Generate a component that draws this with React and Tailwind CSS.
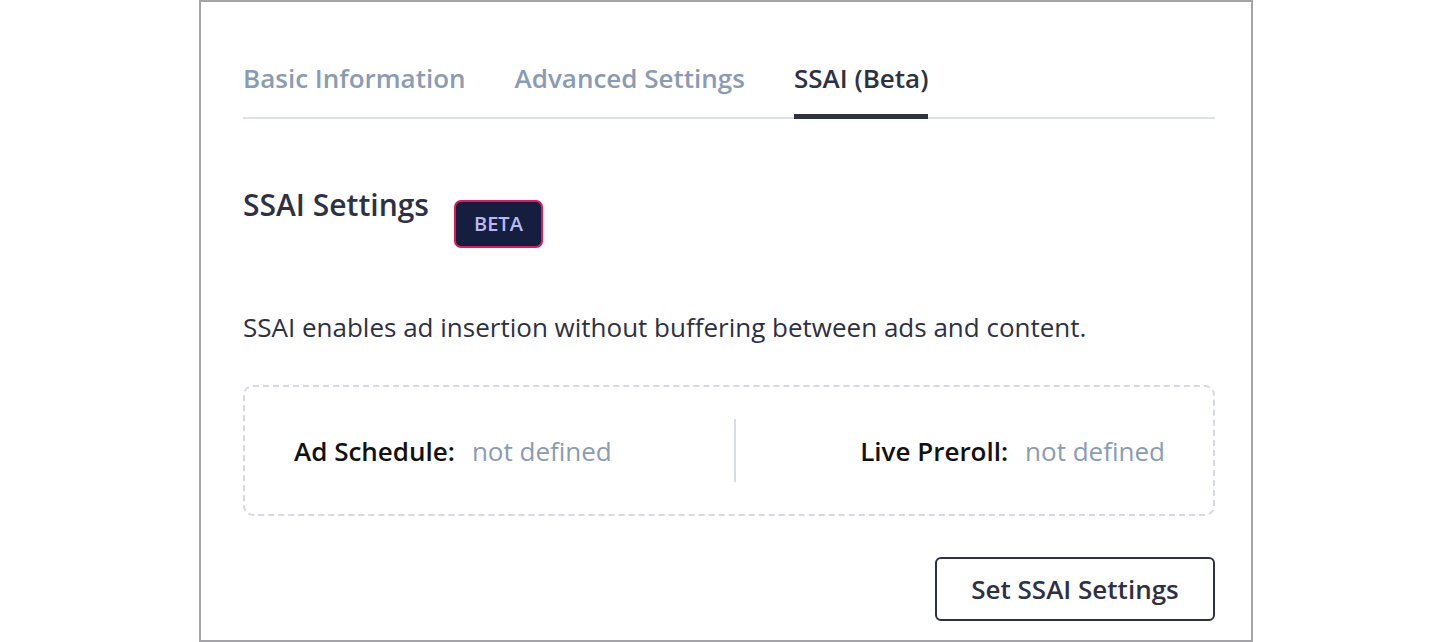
import React, { useState } from "react";

const tabs = ["Basic Information", "Advanced Settings", "SSAI (Beta)"];

function Field({ label, value }) {
  return (
    <div className="flex items-center gap-[17px] text-[26px] leading-[30px]">
      <span className="font-semibold text-[#111111]">{label}</span>
      <span className="text-[#8a9bb6]">{value}</span>
    </div>
  );
}

export default function App() {
  const [active, setActive] = useState(2);

  return (
    <div
      className="flex justify-center bg-white h-[642px] overflow-hidden"
      style={{ fontFamily: '"Open Sans", "Noto Sans", sans-serif' }}
    >
      <div className="ml-[6px] w-[1054px] h-[642px] border-2 border-[#a4a4a8] bg-white pl-[42px] pr-[36px] flex flex-col">
        {/* Tabs */}
        <div className="flex gap-[49px] border-b-2 border-[#dde1ea] pt-[60px]">
          {tabs.map((tab, i) => (
            <button
              key={tab}
              onClick={() => setActive(i)}
              className={
                i === active
                  ? "text-[26px] leading-[32px] font-semibold text-[#2d3142] pb-[20px] border-b-[5px] border-[#2d3142] -mb-[2px]"
                  : "text-[26px] leading-[32px] font-semibold text-[#8a9bb6] pb-[20px] border-b-[5px] border-transparent -mb-[2px]"
              }
            >
              {tab}
            </button>
          ))}
        </div>

        {/* Heading */}
        <div className="flex items-start mt-[68px]">
          <h2 className="text-[30px] leading-[36px] font-semibold text-[#2d3142]">
            SSAI Settings
          </h2>
          <span className="ml-[25px] mt-[13px] w-[89px] h-[48px] flex items-center justify-center rounded-[7px] border-2 border-[#e0195a] bg-[#161e40] text-[#b9b8f2] text-[20px] font-semibold">
            BETA
          </span>
        </div>

        <p className="mt-[64px] text-[26px] leading-[30px] text-[#2d3142]">
          SSAI enables ad insertion without buffering between ads and content.
        </p>

        {/* Settings summary */}
        <div className="mt-[43px] h-[131px] border-2 border-dashed border-[#d5d9e2] rounded-[10px] flex items-center">
          <div className="w-[489px] pl-[49px] flex">
            <Field label="Ad Schedule:" value="not defined" />
          </div>
          <div className="w-[2px] h-[63px] bg-[#d8dce4]" />
          <div className="flex-1 pr-[48px] flex justify-end">
            <Field label="Live Preroll:" value="not defined" />
          </div>
        </div>

        <div className="flex justify-end mt-[41px]">
          <button className="w-[280px] h-[64px] border-2 border-[#2d3142] rounded-[6px] text-[26px] font-semibold text-[#2d3142]">
            Set SSAI Settings
          </button>
        </div>
      </div>
    </div>
  );
}
